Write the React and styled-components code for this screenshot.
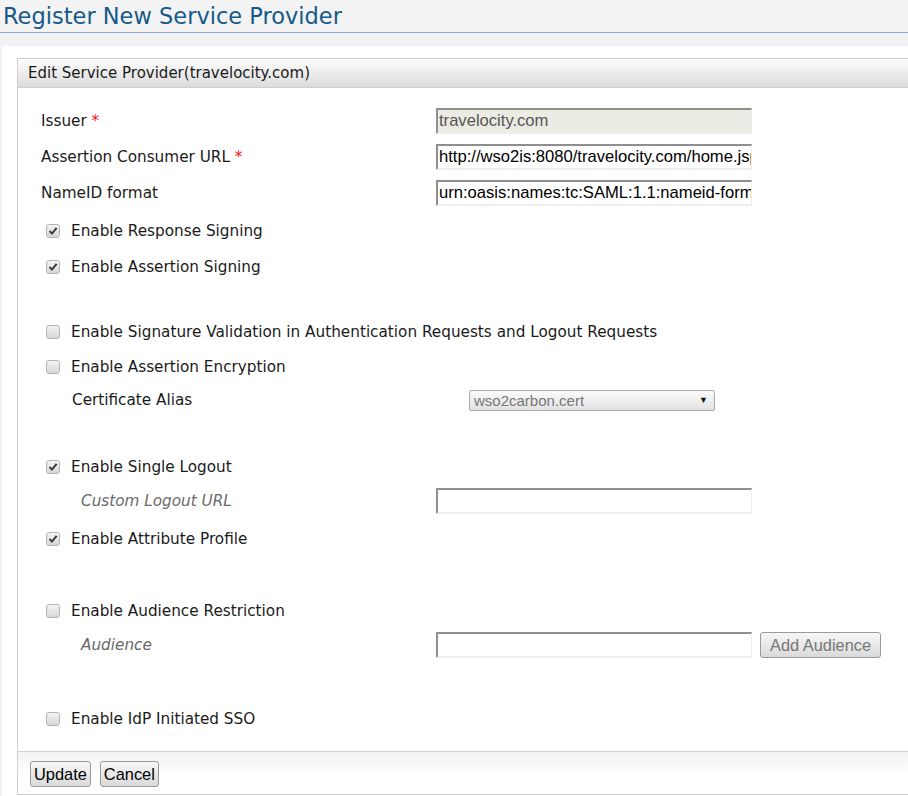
import styled, { createGlobalStyle } from "styled-components";

const GlobalStyle = createGlobalStyle`
  html, body {
    margin: 0;
    padding: 0;
    background: #f3f3f3;
    overflow-x: hidden;
  }
  body {
    font-family: "DejaVu Sans", Verdana, sans-serif;
    color: #222;
  }
`;

const PageHeader = styled.div`
  height: 46px;
  background: #f3f3f3;
`;

const Title = styled.h2`
  margin: 0;
  padding: 3px 0 0 3px;
  box-sizing: border-box;
  height: 33px;
  font-weight: normal;
  font-size: 22.5px;
  line-height: 26px;
  color: #16598b;
  border-bottom: 1px solid #8ea4cc;
`;

const Content = styled.div`
  margin-left: 2px;
  background: #fff;
  padding: 12px 0 0 15px;
  min-height: 750px;
`;

const Panel = styled.div`
  width: 920px;
  border: 1px solid #cfcfcf;
  border-right: none;
`;

const PanelHeader = styled.div`
  height: 28px;
  line-height: 28px;
  padding-left: 10px;
  font-size: 15px;
  color: #1a1a1a;
  background: linear-gradient(#fdfdfd, #dcdcdc);
  border-bottom: 1px solid #cfcfcf;
`;

const PanelBody = styled.div`
  padding: 20px 0 14px 23px;
`;

const Row = styled.div`
  display: grid;
  grid-template-columns: 395px 1fr;
  align-items: ${(p) => (p.$top ? "start" : "center")};
  height: ${(p) => p.$h}px;
  margin-top: ${(p) => p.$mt || 0}px;
  font-size: 15.25px;
`;

const Label = styled.label`
  padding-left: ${(p) => p.$indent || 0}px;
  line-height: ${(p) => (p.$top ? "26px" : "normal")};
  font-style: ${(p) => (p.$italic ? "italic" : "normal")};
  color: ${(p) => (p.$italic ? "#6a6a6a" : "#1a1a1a")};
`;

const Req = styled.span`
  color: #e8201a;
`;

const TextInput = styled.div`
  width: 316px;
  height: 26px;
  box-sizing: border-box;
  border-style: solid;
  border-width: 2px 1px 2px 2px;
  border-color: #8f8f8f #eeeeee #eeeeee #8f8f8f;
  background: ${(p) => (p.$disabled ? "#ebebe4" : "#fff")};
  color: ${(p) => (p.$disabled ? "#555" : "#000")};
  font-family: "Liberation Sans", Arial, sans-serif;
  font-size: 16.6px;
  line-height: 22px;
  padding-left: 1px;
  white-space: nowrap;
  overflow: hidden;
`;

const CheckRow = styled.div`
  display: flex;
  align-items: center;
  height: ${(p) => p.$h}px;
  margin-top: ${(p) => p.$mt || 0}px;
  padding-left: 5px;
  font-size: 15.25px;
  color: #1a1a1a;
`;

const Box = styled.span`
  width: 14px;
  height: 14px;
  box-sizing: border-box;
  border: 1px solid #b4b4b4;
  border-radius: 3px;
  background: linear-gradient(#f4f4f4, #d6d6d6);
  margin-right: 11px;
  display: flex;
  align-items: center;
  justify-content: center;
`;

const SelectBox = styled.div`
  margin-left: 33px;
  width: 246px;
  height: 21px;
  box-sizing: border-box;
  border: 1px solid #a9a9a9;
  border-radius: 2px;
  background: linear-gradient(#fbfbfb, #e2e2e2);
  display: flex;
  align-items: center;
  justify-content: space-between;
  padding: 0 6px 0 4px;
  font-family: "Liberation Sans", Arial, sans-serif;
  font-size: 15px;
  color: #777;
`;

const Arrow = styled.span`
  font-size: 9px;
  color: #111;
`;

const InputGroup = styled.div`
  display: flex;
  align-items: center;
  gap: 8px;
`;

const Button = styled.button`
  height: 26px;
  box-sizing: border-box;
  padding: 0 ${(p) => p.$px || 3}px;
  border: 1px solid #9a9a9a;
  border-radius: 3px;
  background: linear-gradient(#f7f7f7, #dadada);
  font-family: "Liberation Sans", Arial, sans-serif;
  font-size: 16.4px;
  color: ${(p) => (p.$muted ? "#777" : "#000")};
`;

const Footer = styled.div`
  height: 43px;
  box-sizing: border-box;
  border-top: 1px solid #d2d2d2;
  background: linear-gradient(#f2f2f2, #ffffff 60%);
  padding: 9px 0 0 12px;
  display: flex;
  gap: 9px;
`;

function Check({ checked, children, h, mt }) {
  return (
    <CheckRow $h={h} $mt={mt}>
      <Box>
        {checked && (
          <svg width="10" height="10" viewBox="0 0 10 10">
            <path
              d="M1.5 5 L4 7.6 L8.6 1.8"
              fill="none"
              stroke="#3a3a3a"
              strokeWidth="2"
            />
          </svg>
        )}
      </Box>
      {children}
    </CheckRow>
  );
}

export default function App() {
  return (
    <>
      <GlobalStyle />
      <PageHeader>
        <Title>Register New Service Provider</Title>
      </PageHeader>
      <Content>
        <Panel>
          <PanelHeader>Edit Service Provider(travelocity.com)</PanelHeader>
          <PanelBody>
            <Row $h={36} $top>
              <Label $top>
                Issuer <Req>*</Req>
              </Label>
              <TextInput $disabled>travelocity.com</TextInput>
            </Row>
            <Row $h={36} $top>
              <Label $top>
                Assertion Consumer URL <Req>*</Req>
              </Label>
              <TextInput>http://wso2is:8080/travelocity.com/home.jsp</TextInput>
            </Row>
            <Row $h={36} $top>
              <Label $top>NameID format</Label>
              <TextInput>urn:oasis:names:tc:SAML:1.1:nameid-format:emailAddress</TextInput>
            </Row>

            <Check checked h={28} mt={1}>Enable Response Signing</Check>
            <Check checked h={44}>Enable Assertion Signing</Check>

            <Check h={36} mt={25}>
              Enable Signature Validation in Authentication Requests and Logout Requests
            </Check>
            <Check h={34}>Enable Assertion Encryption</Check>
            <Row $h={32}>
              <Label $indent={31}>Certificate Alias</Label>
              <SelectBox>
                wso2carbon.cert
                <Arrow>▼</Arrow>
              </SelectBox>
            </Row>

            <Check checked h={36} mt={33}>Enable Single Logout</Check>
            <Row $h={32}>
              <Label $indent={40} $italic>Custom Logout URL</Label>
              <TextInput />
            </Row>
            <Check checked h={44}>Enable Attribute Profile</Check>

            <Check h={36} mt={32}>Enable Audience Restriction</Check>
            <Row $h={32}>
              <Label $indent={40} $italic>Audience</Label>
              <InputGroup>
                <TextInput />
                <Button $muted $px={9}>Add Audience</Button>
              </InputGroup>
            </Row>

            <Check h={36} mt={40}>Enable IdP Initiated SSO</Check>
          </PanelBody>
          <Footer>
            <Button>Update</Button>
            <Button>Cancel</Button>
          </Footer>
        </Panel>
      </Content>
    </>
  );
}
